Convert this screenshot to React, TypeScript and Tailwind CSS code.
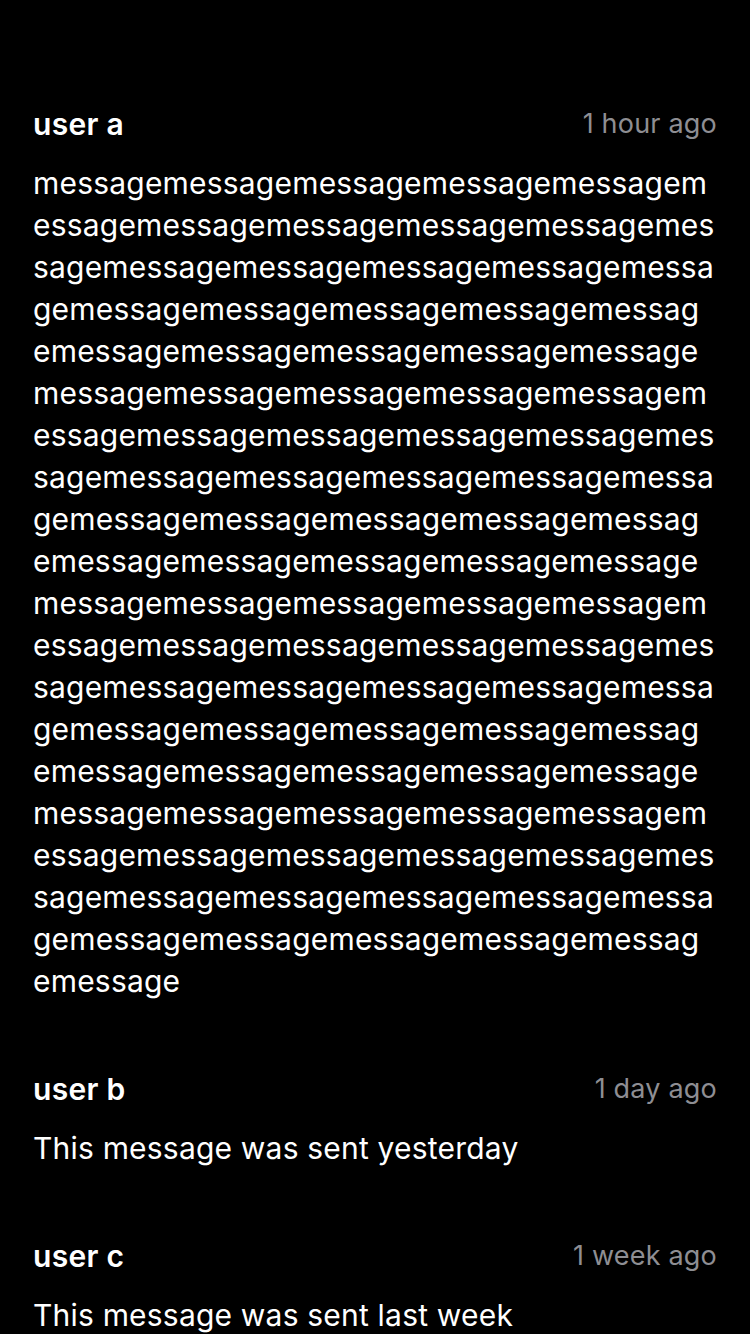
import React from "react";

const longMsg = "message".repeat(100);

const items = [
  { user: "user a", time: "1 hour ago", text: longMsg },
  { user: "user b", time: "1 day ago", text: "This message was sent yesterday" },
  { user: "user c", time: "1 week ago", text: "This message was sent last week" },
];

export default function App() {
  return (
    <div
      className="min-h-[1334px] w-[750px] bg-black px-[33px] pt-[107px] text-white"
      style={{ fontFamily: 'Inter, "Noto Sans", sans-serif' }}
    >
      <div className="flex flex-col gap-[70px]">
        {items.map((it) => (
          <div key={it.user} className="flex flex-col gap-[21px]">
            <div className="flex h-[34px] items-center justify-between">
              <span className="text-[30px] font-semibold leading-[34px] tracking-[0.3px]">{it.user}</span>
              <span className="text-[27px] leading-[34px] tracking-[0.2px] text-[#8e8e93]">{it.time}</span>
            </div>
            <p className="break-all text-[30px] leading-[42px] tracking-[0.2px]">{it.text}</p>
          </div>
        ))}
      </div>
    </div>
  );
}
